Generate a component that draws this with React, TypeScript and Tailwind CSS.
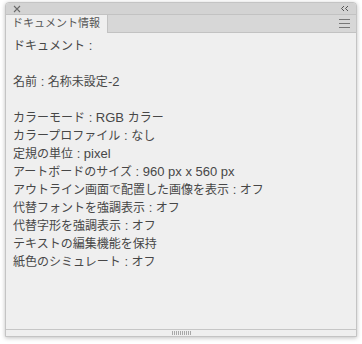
const lines: (string | null)[] = [
  'ドキュメント :',
  null,
  '名前 : 名称未設定-2',
  null,
  'カラーモード : RGB カラー',
  'カラープロファイル : なし',
  '定規の単位 : pixel',
  'アートボードのサイズ : 960 px x 560 px',
  'アウトライン画面で配置した画像を表示 : オフ',
  '代替フォントを強調表示 : オフ',
  '代替字形を強調表示 : オフ',
  'テキストの編集機能を保持',
  '紙色のシミュレート : オフ',
]

// latin runs are set a bit larger, like the Hiragino/Helvetica mix in the panel
function Line({ text }: { text: string }) {
  const parts = text.split(/([\x20-\x7e]+)/).filter(Boolean)
  return (
    <>
      {parts.map((p, i) =>
        /^[\x20-\x7e]+$/.test(p) ? (
          <span key={i} className="text-[13px]">
            {p}
          </span>
        ) : (
          <span key={i}>{p}</span>
        ),
      )}
    </>
  )
}

export default function App() {
  return (
    <div className="w-[362px] h-[344px] bg-white pt-[2px] pl-[5px]">
      <div
        className="w-[352px] h-[335px] flex flex-col rounded-t-[4px] border border-[#c4c4c4] bg-[#efefef] shadow-[0_1px_4px_rgba(0,0,0,0.25)] overflow-hidden"
        style={{ fontFamily: '"Liberation Sans", "Noto Sans CJK JP", sans-serif' }}
      >
        {/* title bar */}
        <div className="h-[12px] flex items-center justify-between px-[4px] bg-[#d3d3d3] border-b border-[#c2c2c2]">
          <svg width="8" height="8" viewBox="0 0 8 8" className="ml-[3px]">
            <path d="M1 1L7 7M7 1L1 7" stroke="#6a6a6a" strokeWidth="1.1" />
          </svg>
          <svg width="9" height="7" viewBox="0 0 9 7" className="mr-[3px]">
            <path d="M4 1L1.5 3.5L4 6M8 1L5.5 3.5L8 6" stroke="#555" strokeWidth="1" fill="none" />
          </svg>
        </div>

        {/* tab row */}
        <div className="h-[18px] flex bg-[#d7d7d7] border-b border-[#c2c2c2]">
          <div className="w-[102px] h-[18px] bg-[#efefef] border-r border-[#c2c2c2] text-[11px] leading-[17px] text-[#555] pl-[6px] -mb-px whitespace-nowrap">
            ドキュメント情報
          </div>
          <div className="flex-1" />
          <div className="flex flex-col justify-center gap-[3px] pr-[6px]">
            <div className="w-[11px] h-px bg-[#777]" />
            <div className="w-[11px] h-px bg-[#777]" />
            <div className="w-[11px] h-px bg-[#777]" />
          </div>
        </div>

        {/* content */}
        <div className="flex-1 pt-[4px] pl-[7px] text-[12px] leading-[18px] text-[#474747]">
          {lines.map((l, i) => (
            <div key={i} className="h-[18px] whitespace-nowrap">
              {l ? <Line text={l} /> : ''}
            </div>
          ))}
        </div>

        {/* bottom grip */}
        <div className="h-[7px] flex items-center justify-center border-t border-[#c6c6c6] bg-[#efefef]">
          <div className="flex gap-[1px]">
            {Array.from({ length: 10 }).map((_, i) => (
              <div key={i} className="w-px h-[4px] bg-[#a8a8a8]" />
            ))}
          </div>
        </div>
      </div>
    </div>
  )
}
